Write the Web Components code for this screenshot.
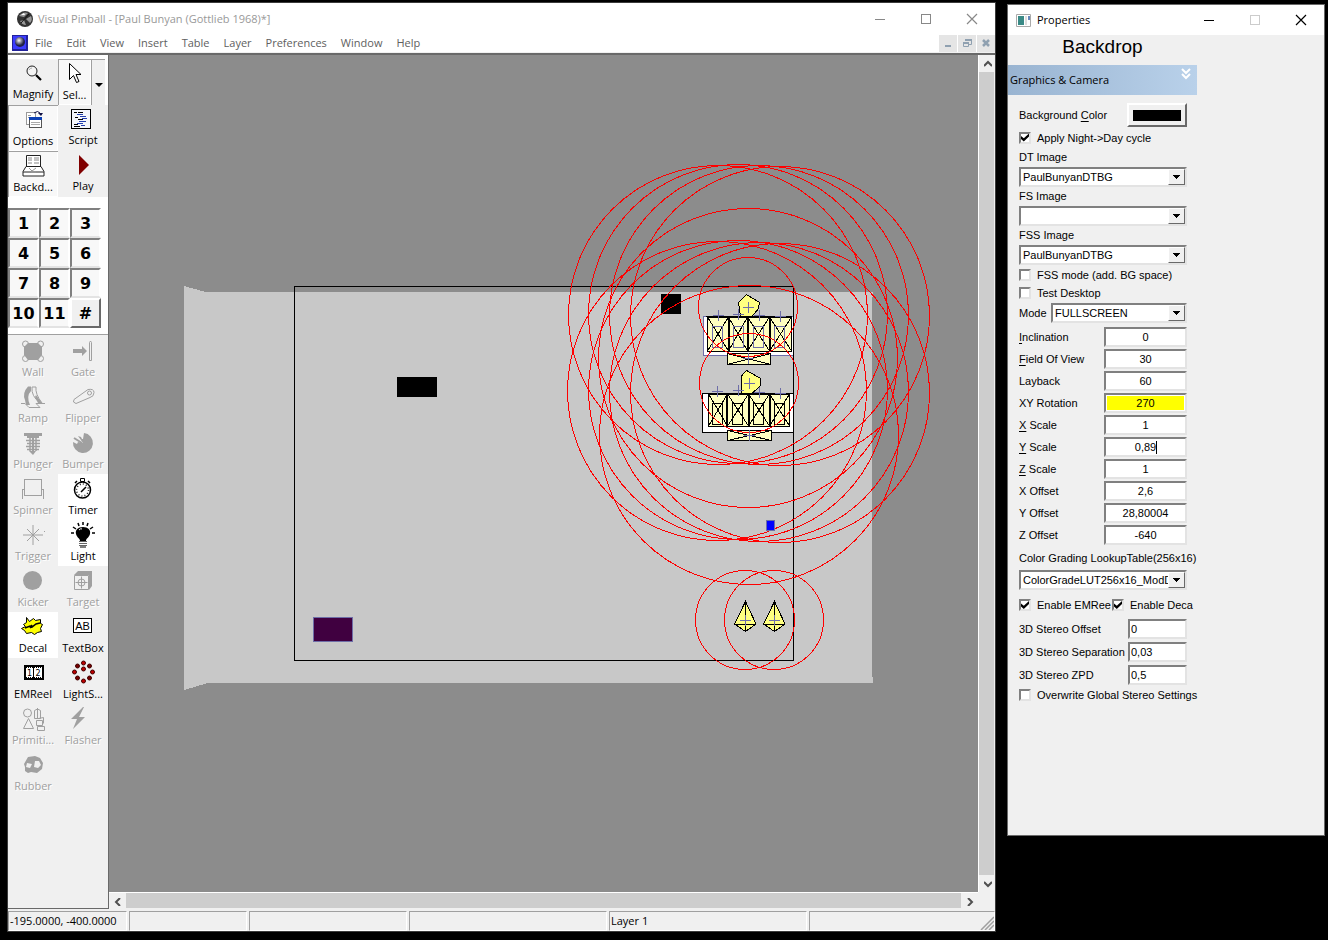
<!DOCTYPE html>
<html lang="en">
<head>
<meta charset="utf-8">
<title>Visual Pinball</title>
<style>
    html { height: 100%; }
    body {
        min-height: 100%;
        margin: 0;
        padding: 2px 3px 8px 7px;
        box-sizing: border-box;
        display: flex;
        gap: 11px;
        background: #000;
        font: 11px/16px "Open Sans", "Noto Sans", sans-serif;
        color: #000;
    }
    editor-window { flex: 1; min-width: 0; }
    properties-window { flex: none; align-self: flex-start; margin-top: 2px; }
</style>
</head>
<body>

<editor-window>
    <menu-bar slot="menu"></menu-bar>
    <tool-bar slot="tools"></tool-bar>
    <table-canvas slot="canvas"></table-canvas>
    <status-bar slot="status"></status-bar>
</editor-window>

<properties-window heading="Backdrop"></properties-window>

<script>
// window buttons, shared by both windows
var winIcons = {
    min: '<svg width="12" height="12" shape-rendering="crispEdges"><path d="M1 6.500h10" stroke="currentColor"/></svg>',
    max: '<svg width="12" height="12" shape-rendering="crispEdges"><rect x="1.500" y="1.500" width="9" height="9" fill="none" stroke="currentColor"/></svg>',
    close: '<svg width="12" height="12"><path d="M1 1l10 10M11 1L1 11" stroke="currentColor" stroke-width="1.200"/></svg>'
};

// 24x24 icons of the tool bar
var icons = {
    magnify: '<circle cx="11" cy="9" r="5" fill="#f4f4f4" stroke="#222"/><path d="M8 8q1-2 3-2" stroke="#aaa" fill="none"/><path d="M15 13l5 5" stroke="#000" stroke-width="2.200"/>',
    select: '<path d="M6.500 1.500v16l4-4 3 7 2.500-1-3-7h5z" fill="#fff" stroke="#000"/>',
    options: '<g shape-rendering="crispEdges"><path d="M5.500 4.500h9v12h-9z" fill="#fff" stroke="#999"/><path d="M7 7h3M7 9h2" stroke="#999"/><rect x="8.500" y="9.500" width="12" height="10" fill="#fff" stroke="#555"/><path d="M8 9h13v3H8z" fill="#0a3fb4"/><path d="M10 14.500h9M10 16.500h9" stroke="#aaa"/></g><path d="M13 5q4-3 6 0" fill="none" stroke="#114"/><path d="M17 5h5l-2 3z" fill="#114"/>',
    script: '<g shape-rendering="crispEdges" fill="none"><path d="M.500 1.500h19v19h-19z" stroke="#000" fill="#f4f6fb"/><path d="M3 4.500h3M7 4.500h5M4 9.500h3M7 11.500h5M3 16.500h4M3 18.500h6" stroke="#000"/><path d="M6 6.500h6M9 8.500h6M11 10.500h5M8 13.500h7M6 15.500h6M10 17.500h4" stroke="#223fae"/></g>',
    backdrop: '<g fill="#fff" stroke="#222"><path d="M5.500 1.500h14v11h-14z"/><path d="M5 12.500h15l3 5v4.500H2V17.500z"/><path d="M2 18h21" /></g><path d="M7 4h4M13 4h5M7 6h4M13 6h5M7 9h4M13 9h5" stroke="#888"/><path d="M8 14l3 3 4-3M10 18h5" stroke="#999" fill="none"/>',
    play: '<path d="M8 1l10 10L8 21z" fill="#800000"/>',
    wall: '<g fill="none" stroke="#a0a0a0"><circle cx="4.500" cy="5" r="3"/><circle cx="19.500" cy="5" r="3"/><circle cx="4.500" cy="19.500" r="3"/><circle cx="19.500" cy="19.500" r="3"/></g><path d="M7 4h10l4 4v8l-4 5H7l-4-5V8z" fill="#a0a0a0"/>',
    gate: '<path d="M2 10h9V7l5 5-5 5v-3H2z" fill="#a0a0a0"/><path d="M18.500 3.500q1-3 2 0v18h-2z" fill="none" stroke="#a0a0a0"/>',
    ramp: '<path d="M10 1.500H7Q1 8 4 15l1 5h4q-4-9 1-14z" fill="#a0a0a0"/><path d="M11 2q-1 9 8 16M11 2h4q-1 7 6 16M0 18.500h4l4 4h11l-4-4h9" fill="none" stroke="#a0a0a0"/><path d="M15 10l6 8h-4l-3-6z" fill="#a0a0a0"/>',
    flipper: '<g fill="none" stroke="#a0a0a0"><path d="M17 4.500q6-1 6 3 0 4-4 5L5 18.500q-4-1-2-4z"/><circle cx="18.500" cy="8" r="2"/></g>',
    plunger: '<path d="M3 2h18v3h-3v2H6V5H3z" fill="#a0a0a0"/><path d="M9 7v13M15 7v13M5 9.500h14M6 12.500h13M5 15.500h14M6 18.500h12" stroke="#a0a0a0" stroke-width="1.500"/><path d="M11 7h2v13h2l-3 4-4-4h3z" fill="#a0a0a0"/>',
    bumper: '<path d="M13 2a10 10 0 1 1-11 9l4 2 1-2 5 1-5-7 3 1 1 2 1 0z" fill="#a0a0a0"/><path d="M3 7l8 5" stroke="#a0a0a0" stroke-width="2"/>',
    spinner: '<g fill="none" stroke="#a0a0a0" shape-rendering="crispEdges"><path d="M3.500 2.500h17v16h-17zM1.500 22v-10h2M22.500 22v-10h-2"/></g>',
    timer: '<g fill="#fff" stroke="#000"><path d="M9.500 1.500h4v3h-4z"/><circle cx="11.500" cy="13" r="8" stroke-width="1.500"/><circle cx="11.500" cy="13" r="6" fill="none" stroke="#222" stroke-width="1.500" stroke-dasharray="1 2.100"/><path d="M10 15l5-5M17 4l2 2M6 4L4 6" stroke-width="1.500"/></g>',
    light: '<path d="M12 4c-5 0-8 3-7 7 1 4 4 4 4 7h6c0-3 3-3 4-7 1-4-2-7-7-7z"/><path d="M3 10H0M5 6L2 4M8 3L7 0M12 2V-1M16 3l1-3M19 6l3-2M21 10h3" stroke="#000" stroke-width="1.500"/><path d="M8 18.500h8M8 20.500h8M8 22.500h8" stroke="#666"/><path d="M9 24h6" stroke="#000"/><path d="M8 7q2-2 3-1" stroke="#fff" fill="none"/>',
    trigger: '<path d="M12 2v20M2 12h20M6 6l12 12M18 6L6 18" stroke="#a0a0a0"/><path d="M23.500 8v1" stroke="#a0a0a0"/>',
    kicker: '<circle cx="11.500" cy="11.500" r="9.500" fill="#a0a0a0"/>',
    target: '<path d="M3 6l4-4h14v15l-3 4V6z" fill="#a0a0a0"/><g fill="none" stroke="#a0a0a0"><path d="M3.500 6.500h14v14h-14z" fill="#f0f0f0"/><circle cx="10.500" cy="13.500" r="3.500"/><path d="M10.500 7.500v12M4.500 13.500h12"/></g>',
    decal: '<path d="M5.500 2.500l3 4 4-3 2 2 5-1v4l2 1-2 4 1 3-4 1-3 2-3-2-5 1-2-3-3-2 4-2-2-2 3-2z" fill="#ffff00" stroke="#000"/><path d="M4 13l5-2 2 1 4-3 4-1M11 10l-2 3" stroke="#000" stroke-width="1.500" fill="none"/>',
    textbox: '<path d="M2.500 3.500h18v14h-18z" fill="#fff" stroke="#000" shape-rendering="crispEdges"/><text x="11.500" y="15" text-anchor="middle" font-family="Liberation Sans, sans-serif" font-size="11">AB</text>',
    emreel: '<g shape-rendering="crispEdges"><path d="M4 5h18v13H4z" fill="#fff" stroke="#000" stroke-width="2"/><path d="M5 6.500h16M5 16.500h16" stroke="#000" stroke-dasharray="1 1"/><path d="M12.500 6v11" stroke="#000"/></g><text x="8.500" y="15" text-anchor="middle" font-family="DejaVu Sans, sans-serif" font-size="8">1</text><text x="17" y="15" text-anchor="middle" font-family="DejaVu Sans, sans-serif" font-size="8">2</text>',
    lightseq: '<g fill="#c00000" stroke="#400000"><circle cx="12.500" cy="2" r="2"/><circle cx="18.500" cy="5" r="2" fill="#700"/><circle cx="21.500" cy="11" r="2"/><circle cx="18.500" cy="17" r="2" fill="#700"/><circle cx="12.500" cy="20" r="2"/><circle cx="6.500" cy="17" r="2" fill="#700"/><circle cx="3.500" cy="11" r="2"/><circle cx="6.500" cy="5" r="2" fill="#700"/><circle cx="12.500" cy="8" r="2"/></g>',
    primitive: '<g fill="none" stroke="#a0a0a0"><circle cx="6.500" cy="6" r="4"/><path d="M7.500 11.500l5 10h-10zM13.500 3.500q3-3 6 0v8h-6zM16.500 1v10M15.500 13.500h6v5h-6zM17.500 11.500l5-1v6M16.500 19.500h7v4h-7z"/></g>',
    flasher: '<path d="M12 0L0 12h6l-4 10L14 10H8l5-10z" fill="#a0a0a0"/>',
    rubber: '<path fill-rule="evenodd" d="M7 4l7-1 5 2 3 5-1 6-5 4-6-1-3 1-3-2v-4l-1-3zM6 10l-1 4 4 1 2-4zM14 8l-1 6 4 1 3-3-2-4z" fill="#a0a0a0"/>'
};

class MenuBar extends HTMLElement{
    constructor(){
        super();

        this.attachShadow({ mode: 'open' });

        var items = ['File', 'Edit', 'View', 'Insert', 'Table', 'Layer', 'Preferences', 'Window', 'Help'];

        this.shadowRoot.innerHTML = `
            <style>
                :host { display: flex; align-items: center; height: 18px; padding-left: 4px; color: #606060; }
                nav { display: flex; flex: 1; }
                nav button { padding: 0 7px; border: 0; background: none; font: inherit; color: inherit; }
                .mdi { display: flex; gap: 1px; }
                .mdi button { width: 18px; height: 17px; padding: 0; border: 0; background: #e5e5e5; color: #8fa0b0; display: flex; align-items: center; justify-content: center; }
            </style>
            <svg width="16" height="16" aria-hidden="true">
                <defs><radialGradient id="b" cx=".4" cy=".35"><stop offset="0" stop-color="#fff"/><stop offset=".5" stop-color="#889"/><stop offset="1" stop-color="#224"/></radialGradient></defs>
                <rect width="16" height="16" fill="#22229a"/><rect x="1" y="1" width="13" height="13" fill="#3c3cff"/><circle cx="8" cy="7" r="5" fill="url(#b)"/>
            </svg>
            <nav>${items.map(function(t){ return '<button>' + t + '</button>'; }).join('')}</nav>
            <div class="mdi">
                <button aria-label="Minimize table"><svg width="12" height="12"><path d="M3 8h6v2H3z" fill="currentColor"/></svg></button>
                <button aria-label="Restore table"><svg width="12" height="12"><path d="M4.500 4V2.500h6v5H8M2.500 5.500h5v4h-5z" fill="none" stroke="currentColor"/><path d="M4 2h7v2H4zM2 5h6v2H2z" fill="currentColor"/></svg></button>
                <button aria-label="Close table"><svg width="12" height="12"><path d="M3 3l6 6M9 3l-6 6" stroke="currentColor" stroke-width="2.500"/></svg></button>
            </div>
        `;
    }
}

customElements.define('menu-bar', MenuBar);


// one tool: icon above its label. state is pressed, disabled, lit or empty
class ToolItem extends HTMLElement{
    constructor(){
        super();
        this.attachShadow({ mode: 'open' });
    }

    connectedCallback(){
        var disabled = this.getAttribute('state') == 'disabled' ? 'disabled' : '';

        this.shadowRoot.innerHTML = `
            <style>
                :host { display: block; min-width: 0; background: #f0f0f0; }
                :host([state="lit"]) { background: #fff; }
                :host([state="pressed"]) { background: #f8f8f8; box-shadow: inset 1px 1px #a0a0a0, inset -1px -1px #fff; }
                button { width: 100%; height: 46px; padding: 3px 0 0; border: 0; background: none; font: inherit; color: #000; display: flex; flex-direction: column; align-items: center; gap: var(--label-gap, 0); }
                :host([state="pressed"]) button { gap: 1px; }
                button:disabled { color: #a0a0a0; text-shadow: 1px 1px #fff; }
                svg { flex: none; overflow: visible; }
            </style>
            <button ${disabled}>
                <svg width="24" height="24" aria-hidden="true">${icons[this.getAttribute('icon')]}</svg>
                <span><slot></slot></span>
            </button>
        `;
    }
}

customElements.define('tool-item', ToolItem);


class ToolBar extends HTMLElement{
    constructor(){
        super();

        this.attachShadow({ mode: 'open' });

        var layers = ['1', '2', '3', '4', '5', '6', '7', '8', '9', '10', '11', '#'];
        var tools = [
            ['wall', 'Wall', 'disabled'], ['gate', 'Gate', 'disabled'],
            ['ramp', 'Ramp', 'disabled'], ['flipper', 'Flipper', 'disabled'],
            ['plunger', 'Plunger', 'disabled'], ['bumper', 'Bumper', 'disabled'],
            ['spinner', 'Spinner', 'disabled'], ['timer', 'Timer', 'lit'],
            ['trigger', 'Trigger', 'disabled'], ['light', 'Light', 'lit'],
            ['kicker', 'Kicker', 'disabled'], ['target', 'Target', 'disabled'],
            ['decal', 'Decal', 'lit'], ['textbox', 'TextBox', ''],
            ['emreel', 'EMReel', ''], ['lightseq', 'LightS...', ''],
            ['primitive', 'Primiti...', 'disabled'], ['flasher', 'Flasher', 'disabled'],
            ['rubber', 'Rubber', 'disabled']
        ];

        this.shadowRoot.innerHTML = `
            <style>
                :host { display: flex; flex-direction: column; width: 100px; border-right: 1px solid #696969; border-bottom: 1px solid #696969; background: #f0f0f0; }
                .top { padding-top: 4px; background: #fff; border-bottom: 1px solid #a0a0a0; }
                .grid { display: grid; grid-template-columns: 1fr 1fr; }
                .split { display: flex; }
                .split tool-item { flex: 1; }
                .drop { width: 14px; padding: 0; border: 0; border-left: 1px solid #a0a0a0; border-top: 1px solid #a0a0a0; background: #f0f0f0; margin-right: 3px; }
                .layers { display: grid; grid-template-columns: repeat(3, 31px); grid-auto-rows: 30px; margin: 11px 0 6px; }
                .layers button { padding: 2px 0 0; border: 2px solid; border-color: #808080 #fff #e3e3e3 #808080; background: #f8f8f8; font: bold 16px/24px "DejaVu Sans", sans-serif; color: #000; }
                .layers button:last-child { background: #f0f0f0; border-color: #fff #696969 #696969 #fff; }
                .tools { margin-top: 1px; --label-gap: 1px; }
            </style>
            <div class="top">
                <div class="grid">
                    <tool-item icon="magnify">Magnify</tool-item>
                    <div class="split">
                        <tool-item icon="select" state="pressed">Sel...</tool-item>
                        <button class="drop" aria-label="Select menu"><svg width="8" height="4"><path d="M0 0h8L4 4z"/></svg></button>
                    </div>
                    <tool-item icon="options" state="pressed">Options</tool-item>
                    <tool-item icon="script">Script</tool-item>
                    <tool-item icon="backdrop" state="pressed">Backd...</tool-item>
                    <tool-item icon="play">Play</tool-item>
                </div>
                <div class="layers">${layers.map(function(n){ return '<button>' + n + '</button>'; }).join('')}</div>
            </div>
            <div class="grid tools">
                ${tools.map(function(t){ return '<tool-item icon="' + t[0] + '" state="' + t[2] + '">' + t[1] + '</tool-item>'; }).join('')}
            </div>
        `;
    }
}

customElements.define('tool-bar', ToolBar);


class ScrollStrip extends HTMLElement{
    constructor(){
        super();

        this.attachShadow({ mode: 'open' });
        this.shadowRoot.innerHTML = `
            <style>
                :host { display: flex; background: #f0f0f0; border-top: 1px solid #fff; }
                :host([vertical]) { flex-direction: column; border-top: 0; border-left: 1px solid #fff; }
                button { flex: none; width: 17px; height: 17px; padding: 0; border: 0; background: none; display: flex; align-items: center; justify-content: center; }
                .thumb { flex: 1; background: #cdcdcd; margin-bottom: 1px; }
                :host([vertical]) .thumb { margin: 0 1px 0 0; }
                :host([vertical]) svg { transform: rotate(90deg); }
                path { fill: none; stroke: #505050; stroke-width: 2; }
            </style>
            <button aria-label="Scroll back"><svg width="8" height="8"><path d="M6 0L2 4l4 4"/></svg></button>
            <div class="thumb"></div>
            <button aria-label="Scroll forward"><svg width="8" height="8"><path d="M2 0l4 4-4 4"/></svg></button>
        `;
    }
}

customElements.define('scroll-strip', ScrollStrip);


// the backdrop with its lights and reels, seen from above
class TableCanvas extends HTMLElement{
    constructor(){
        super();

        this.attachShadow({ mode: 'open' });

        // center and falloff radius of each light
        var lights = [
            [718, 315, 149], [738, 314, 149], [759, 315, 149], [780, 316, 149], [748, 358, 149], [748, 307, 49],
            [717, 391, 149], [738, 390, 149], [759, 392, 149], [780, 393, 149], [749, 435, 149], [749, 383, 49],
            [745, 620, 49], [774, 620, 49]
        ];
        var rings = lights.map(function(l){
            return '<circle cx="' + l[0] + '" cy="' + l[1] + '" r="' + l[2] + '.500"/>';
        }).join('');
        var marks = lights.map(function(l){
            return 'M' + (l[0] - 5) + ' ' + (l[1] + 0.5) + 'h11M' + (l[0] + 0.5) + ' ' + (l[1] - 5) + 'v11';
        }).join('');

        // a row of crossed cells between the given x positions
        function cells(xs, top, bottom){
            var d = '';
            for (var i = 0; i < xs.length - 1; i++) {
                var a = xs[i] + 0.5;
                var b = xs[i + 1] + 0.5;
                d += 'M' + a + ' ' + top + 'H' + b + 'V' + bottom + 'H' + a + 'z';
                d += 'M' + a + ' ' + top + 'L' + b + ' ' + bottom + 'M' + b + ' ' + top + 'L' + a + ' ' + bottom;
            }
            return d;
        }

        function inner(xs, top, height){
            return xs.map(function(x){ return 'M' + x + '.500 ' + top + '.500h10v' + height + 'h-10z'; }).join('');
        }

        var bulb = 'M745.500 601.500l-11 22.500 11 7.500 10.500-7.500zM745.500 601v30M734 624.500h22';

        this.shadowRoot.innerHTML = `
            <style>
                :host { display: grid; grid-template-columns: 1fr 17px; grid-template-rows: 1fr 17px; min-width: 0; background: #f0f0f0; }
                .view { position: relative; overflow: hidden; background: #8c8c8c; }
                /* the drawing is larger than its view and must not widen it */
                .view svg { position: absolute; left: 0; top: 0; width: 100%; height: 100%; }
            </style>
            <div class="view">
                <svg shape-rendering="crispEdges" role="img" aria-label="Backdrop">
                    <g transform="translate(-109 -55)">
                        <path d="M184 286l22 6h667v5h-1v380h1v6H208l-24 7z" fill="#c8c8c8"/>
                        <path d="M661 294h20v20h-20zM397 377h40v20h-40z"/>
                        <rect x="313.500" y="617.500" width="39" height="24" fill="#400040" stroke="#6e6ea8"/>
                        <rect x="703.500" y="316.500" width="90" height="39" fill="#fff" stroke="#6e6ea8"/>
                        <rect x="702.500" y="393.500" width="91" height="39" fill="#fff" stroke="#000"/>
                        <g fill="#ffffc0" stroke="#000">
                            <path d="${cells([707, 728, 747, 769, 791], 317, 351)}"/>
                            <path d="${cells([708, 727, 748, 769, 789], 394, 426)}"/>
                            <path d="M706 316.500h86M707 351.500h85M708 394.500h82M708 426.500h82"/>
                            <path d="M729 317v34M748 317v34M770 317v34M727 394v32M749 394v32M770 394v32" stroke-width="2"/>
                            <path d="${cells([727, 770], 353.5, 364.5)}"/>
                            <path d="${cells([727, 771], 430.5, 440.5)}"/>
                        </g>
                        <path d="${inner([712, 733, 753, 774], 326, 21)}" fill="none" stroke="#6e6ea8"/>
                        <path d="${inner([712, 732, 753, 774], 403, 21)}" fill="none" stroke="#000"/>
                        <g fill="#ffff80" stroke="#000">
                            <path d="M746.500 294.500l13 8-1 6-6.500 8h-11.500l-2-14z"/>
                            <path d="M746.500 370.500l14 8v7l-8.500 8h-11v-17z"/>
                            <path d="${bulb}"/>
                            <path d="${bulb}" transform="translate(29 0)"/>
                        </g>
                        <path d="M294.500 286.500h499v374h-499z" fill="none" stroke="#000"/>
                        <g fill="none" stroke="#f00">${rings}</g>
                        <path d="${marks}" fill="none" stroke="#6e6ea8"/>
                        <rect x="766.500" y="520.500" width="8" height="10" fill="#00f" stroke="#6e6ea8"/>
                    </g>
                </svg>
            </div>
            <scroll-strip vertical></scroll-strip>
            <scroll-strip></scroll-strip>
        `;
    }
}

customElements.define('table-canvas', TableCanvas);


class StatusBar extends HTMLElement{
    constructor(){
        super();

        this.attachShadow({ mode: 'open' });
        this.shadowRoot.innerHTML = `
            <style>
                :host { display: grid; grid-template-columns: 119px 118px 158px 198px 198px 1fr; gap: 2px; padding-top: 2px; background: #f0f0f0; }
                span { height: 18px; line-height: 18px; padding-left: 1px; border: 1px solid; border-color: #a0a0a0 #fff #fff #a0a0a0; white-space: nowrap; }
                span:first-child { border-left: 0; }
                .last { display: flex; justify-content: flex-end; align-items: flex-end; }
            </style>
            <span>-195.0000, -400.0000</span><span></span><span></span><span></span><span>Layer 1</span>
            <span class="last"><svg width="14" height="14"><path d="M1 14L14 1M5 14l9-9M9 14l5-5" stroke="#a0a0a0" stroke-width="1.500"/></svg></span>
        `;
    }
}

customElements.define('status-bar', StatusBar);


class EditorWindow extends HTMLElement{
    constructor(){
        super();

        this.attachShadow({ mode: 'open' });
        this.shadowRoot.innerHTML = `
            <style>
                :host { display: flex; flex-direction: column; border: 1px solid #3c3c3c; background: #fff; box-sizing: border-box; }
                header { display: flex; align-items: center; height: 31px; padding-left: 9px; color: #999; }
                h1 { flex: 1; margin: 0 0 0 5px; font: inherit; }
                header button { width: 46px; height: 30px; padding: 0; border: 0; background: none; color: #888; display: flex; align-items: center; justify-content: center; }
                .work { flex: 1; display: flex; border-top: 2px solid #696969; }
                .menu { border-bottom: 1px solid #f0f0f0; }
                slot[name="canvas"]::slotted(*) { flex: 1; }
            </style>
            <header>
                <svg width="16" height="16" aria-hidden="true"><circle cx="8" cy="8" r="8" fill="#333"/><path d="M2 5q4-5 9-3l-4 4zM9 8l5-3q2 4-1 7zM3 10l4-1 2 5q-4 0-6-4z" fill="#999"/><path d="M4 4l3-2 1 2z" fill="#fff"/><path d="M4 12L12 3" stroke="#111"/></svg>
                <h1>Visual Pinball - [Paul Bunyan (Gottlieb 1968)*]</h1>
                <button aria-label="Minimize">${winIcons.min}</button>
                <button aria-label="Maximize">${winIcons.max}</button>
                <button aria-label="Close">${winIcons.close}</button>
            </header>
            <div class="menu"><slot name="menu"></slot></div>
            <div class="work"><slot name="tools"></slot><slot name="canvas"></slot></div>
            <slot name="status"></slot>
        `;
    }
}

customElements.define('editor-window', EditorWindow);


// label and text box on one row
class PropField extends HTMLElement{
    constructor(){
        super();
        this.attachShadow({ mode: 'open' });
    }

    connectedCallback(){
        this.shadowRoot.innerHTML = `
            <style>
                :host { display: flex; align-items: center; justify-content: space-between; height: 22px; white-space: nowrap; }
                :host([stereo]) { height: 23px; }
                input { width: 83px; height: 20px; padding: 0 2px; box-sizing: border-box; border: 2px solid; border-color: #808080 #e3e3e3 #e3e3e3 #808080; background: #fff; font: inherit; color: #000; text-align: center; outline: 0; }
                :host([stereo]) input { width: 59px; padding: 0 1px; text-align: left; }
                :host([marked]) input { background: #ff0; box-shadow: inset 0 0 0 1px #fff; }
                :host([editing]) input { background: linear-gradient(#000, #000) 50px 2px / 1px 13px no-repeat #fff; }
            </style>
            <label for="f"><slot></slot></label>
            <input id="f" type="text" value="${this.getAttribute('value')}">
        `;
    }
}

customElements.define('prop-field', PropField);


class PropCheck extends HTMLElement{
    constructor(){
        super();
        this.attachShadow({ mode: 'open' });
    }

    connectedCallback(){
        this.shadowRoot.innerHTML = `
            <style>
                :host { display: flex; align-items: center; gap: 6px; height: 18px; white-space: nowrap; }
                input { flex: none; appearance: none; width: 12px; height: 12px; box-sizing: border-box; margin: 0; border: 2px solid; border-color: #808080 #e3e3e3 #e3e3e3 #808080; background: #fff; }
                input:checked::before { content: ""; display: block; width: 8px; height: 8px; background: #000; clip-path: polygon(0 30%, 35% 60%, 100% 0, 100% 38%, 35% 100%, 0 68%); }
            </style>
            <input id="c" type="checkbox" ${this.hasAttribute('on') ? 'checked' : ''}>
            <label for="c"><slot></slot></label>
        `;
    }
}

customElements.define('prop-check', PropCheck);


class PropSelect extends HTMLElement{
    constructor(){
        super();
        this.attachShadow({ mode: 'open' });
    }

    connectedCallback(){
        this.shadowRoot.innerHTML = `
            <style>
                :host { display: block; white-space: nowrap; }
                :host([inline]) { display: flex; align-items: center; justify-content: space-between; }
                label { display: block; line-height: var(--label-height, 19px); }
                .box { display: flex; height: 20px; box-sizing: border-box; border: 2px solid; border-color: #808080 #e3e3e3 #e3e3e3 #808080; background: #fff; }
                :host([inline]) .box { width: 136px; }
                select { flex: 1; min-width: 0; appearance: none; border: 0; padding: 0 0 0 2px; background: none; font: inherit; color: #000; outline: 0; text-overflow: clip; }
                .arrow { flex: none; width: 17px; box-sizing: border-box; display: flex; align-items: center; justify-content: center; border: 1px solid; border-color: #fff #696969 #696969 #fff; background: #f0f0f0; }
            </style>
            <label for="s"><slot></slot></label>
            <div class="box">
                <select id="s"><option>${this.getAttribute('value')}</option></select>
                <span class="arrow"><svg width="7" height="4" shape-rendering="crispEdges"><path d="M0 0h7L3.500 4z"/></svg></span>
            </div>
        `;
    }
}

customElements.define('prop-select', PropSelect);


class PropertiesWindow extends HTMLElement{
    constructor(){
        super();
        this.attachShadow({ mode: 'open' });
    }

    connectedCallback(){
        this.shadowRoot.innerHTML = `
            <style>
                :host { display: block; width: 318px; padding-bottom: 131px; box-sizing: border-box; border: 1px solid #696969; background: #f0f0f0; }
                header { display: flex; align-items: center; height: 30px; padding-left: 8px; background: #fff; }
                header span { flex: 1; margin-left: 6px; }
                header button { width: 46px; height: 30px; padding: 0; border: 0; background: none; color: #000; display: flex; align-items: center; justify-content: center; }
                header button:disabled { color: #ccc; }
                .panel { width: 189px; }
                h2 { margin: 0; font: 19px/24px "Liberation Sans", Arial, sans-serif; text-align: center; }
                .bar { display: flex; justify-content: space-between; height: 30px; margin-top: 6px; padding: 0 4px 0 2px; line-height: 30px; background: linear-gradient(90deg, #99b4d1, #b9d1ea); }
                .bar button { height: 20px; padding: 0; border: 0; background: none; }
                form { display: flex; flex-direction: column; padding: 8px 10px 0 11px; font: 11px/16px "Liberation Sans", Arial, sans-serif; }
                .color { display: flex; align-items: center; justify-content: space-between; }
                .color button { width: 60px; height: 24px; padding: 4px; border: 2px solid; border-color: #fff #696969 #696969 #fff; background: #f0f0f0; }
                .color i { display: block; height: 11px; background: #000; }
                u { text-underline-offset: 2px; }
                .day { height: 21px; }
                .fss { margin-top: 1px; }
                .mode { margin: 1px 0 3px; }
                .lut { margin-top: 1px; --label-height: 23px; }
                .pair { display: grid; grid-template-columns: 93px 1fr; margin: 6px 0 3px; }
            </style>
            <header>
                <svg width="15" height="13" aria-hidden="true"><path d="M.500.500h14v12H.500z" fill="#fff" stroke="#aaa"/><path d="M2 2h6v9H2z" fill="#3a8a86"/><path d="M9 2h2v9H9z" fill="#ddd"/><path d="M12 2h2v4h-2z" fill="#68b"/></svg>
                <span>Properties</span>
                <button aria-label="Minimize">${winIcons.min}</button>
                <button aria-label="Maximize" disabled>${winIcons.max}</button>
                <button aria-label="Close">${winIcons.close}</button>
            </header>
            <div class="panel">
                <h2>${this.getAttribute('heading')}</h2>
                <div class="bar">
                    <span>Graphics &amp; Camera</span>
                    <button aria-label="Collapse"><svg width="14" height="14"><path d="M3 2l4 4 4-4M3 7l4 4 4-4" fill="none" stroke="#fff" stroke-width="2"/></svg></button>
                </div>
                <form>
                    <div class="color">
                        <label for="bg">Background <u>C</u>olor</label>
                        <button id="bg" type="button"><i></i></button>
                    </div>
                    <prop-check class="day" on>Apply Night-&gt;Day cycle</prop-check>
                    <prop-select value="PaulBunyanDTBG">DT Image</prop-select>
                    <prop-select value="">FS Image</prop-select>
                    <prop-select value="PaulBunyanDTBG">FSS Image</prop-select>
                    <prop-check class="fss">FSS mode (add. BG space)</prop-check>
                    <prop-check>Test Desktop</prop-check>
                    <prop-select class="mode" inline value="FULLSCREEN">Mode</prop-select>
                    <prop-field value="0"><u>I</u>nclination</prop-field>
                    <prop-field value="30"><u>F</u>ield Of View</prop-field>
                    <prop-field value="60">Layback</prop-field>
                    <prop-field value="270" marked>XY Rotation</prop-field>
                    <prop-field value="1"><u>X</u> Scale</prop-field>
                    <prop-field value="0,89" editing><u>Y</u> Scale</prop-field>
                    <prop-field value="1"><u>Z</u> Scale</prop-field>
                    <prop-field value="2,6">X Offset</prop-field>
                    <prop-field value="28,80004">Y Offset</prop-field>
                    <prop-field value="-640">Z Offset</prop-field>
                    <prop-select class="lut" value="ColorGradeLUT256x16_ModDefault">Color Grading LookupTable(256x16)</prop-select>
                    <div class="pair">
                        <prop-check on>Enable EMRee</prop-check>
                        <prop-check on>Enable Deca</prop-check>
                    </div>
                    <prop-field stereo value="0">3D Stereo Offset</prop-field>
                    <prop-field stereo value="0,03">3D Stereo Separation</prop-field>
                    <prop-field stereo value="0,5">3D Stereo ZPD</prop-field>
                    <prop-check>Overwrite Global Stereo Settings</prop-check>
                </form>
            </div>
        `;
    }
}

customElements.define('properties-window', PropertiesWindow);
</script>
</body>
</html>
